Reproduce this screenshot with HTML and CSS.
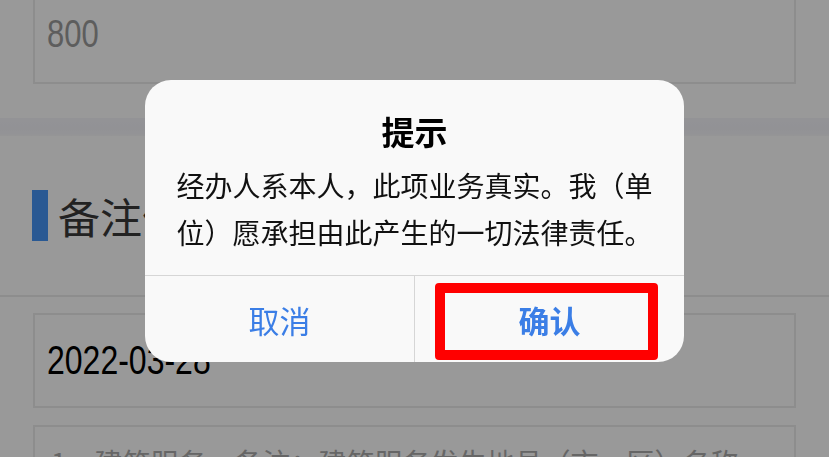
FILE: index.html
```html
<!DOCTYPE html>
<html lang="zh-CN">

<head>
  <meta charset="UTF-8">
  <meta name="viewport" content="width=device-width, initial-scale=1.0">
  <title>备注信息</title>
  <link rel="stylesheet" href="styles.css">
</head>

<body>
  <div class="page">
    <div class="field field-top">
      <span class="num placeholder">800</span>
    </div>

    <div class="band"></div>

    <div class="section-head">
      <span class="section-bar"></span>
      <h2>备注信息</h2>
    </div>

    <div class="field field-date">
      <span class="num">2022-03-28</span>
    </div>

    <div class="field field-note">
      <p class="note-text">1、建筑服务，备注：建筑服务发生地县（市、区）名称及项目名称</p>
    </div>
  </div>

  <!-- confirm dialog -->
  <div class="mask">
    <div class="dialog">
      <div class="dialog-title">提示</div>
      <div class="dialog-msg">经办人系本人，此项业务真实。我（单位）愿承担由此产生的一切法律责任。</div>
      <div class="dialog-btns">
        <button class="btn">取消</button>
        <button class="btn btn-ok">确认<span class="mark"></span></button>
      </div>
    </div>
  </div>
</body>

</html>
```

FILE: styles.css
```css
* {
  box-sizing: border-box;
}

body {
  margin: 0;
  background: #fff;
  font-family: "Liberation Sans", "Noto Sans CJK SC", sans-serif;
  color: #000;
  overflow: hidden;
}

.page {
  display: flex;
  flex-direction: column;
}

.field {
  margin: 0 33px;
  border: 2px solid #ececec;
  padding: 0 12px;
  display: flex;
  align-items: center;
  font-size: 32px;
}

/* the phone font is narrow and tall */
.num {
  display: inline-block;
  transform: scaleY(1.28);
}

.field-top {
  margin-top: -16px;
  height: 100px;
  font-size: 31px;
}

.placeholder {
  color: #9c9c9c;
}

.band {
  margin-top: 34px;
  height: 18px;
  background: linear-gradient(#f6f6fb, #f3f3f9 60%, #f8f8fb);
}

.section-head {
  height: 161px;
  display: flex;
  align-items: center;
  padding-left: 32px;
  border-bottom: 2px solid #ececec;
}

.section-bar {
  width: 16px;
  height: 51px;
  background: #4795f6;
}

.section-head h2 {
  margin: 0 0 0 10px;
  font-family: "Noto Sans CJK SC", sans-serif;
  font-size: 42px;
  font-weight: 400;
  color: #3a3a3a;
}

.field-date {
  margin-top: 16px;
  height: 95px;
}

.field-note {
  margin-top: 17px;
  height: 120px;
  display: block;
  padding: 15px 0 0 16px;
  font-family: "Noto Sans CJK SC", sans-serif;
  font-size: 28px;
  color: #ababab;
}

.note-text {
  margin: 0;
  width: 700px;
}

.mask {
  position: fixed;
  inset: 0;
  background: rgba(0, 0, 0, 0.4);
  display: flex;
  justify-content: center;
  align-items: flex-start;
  padding-top: 80px;
}

.dialog {
  width: 539px;
  background: #f9f9f9;
  border-radius: 26px;
  overflow: hidden;
  font-family: "Noto Sans CJK SC", sans-serif;
}

.dialog-title {
  padding-top: 31px;
  line-height: 40px;
  font-size: 33px;
  font-weight: bold;
  text-align: center;
  color: #000;
}

.dialog-msg {
  margin-top: 11px;
  padding: 0 31px 19px;
  font-size: 28px;
  line-height: 47px;
  text-align: center;
  color: #111;
}

.dialog-btns {
  display: flex;
  border-top: 1px solid #d6d6d6;
}

.btn {
  flex: 1;
  height: 86px;
  border: none;
  background: none;
  font-family: "Noto Sans CJK SC", sans-serif;
  font-size: 31px;
  color: #3b7ee6;
  padding: 0;
}

.btn + .btn {
  border-left: 1px solid #d6d6d6;
}

.btn-ok {
  position: relative;
  font-weight: bold;
}

.mark {
  position: absolute;
  left: 20px;
  top: 7px;
  width: 223px;
  height: 77px;
  border: 10px solid #ff0000;
  border-radius: 4px;
}
```
